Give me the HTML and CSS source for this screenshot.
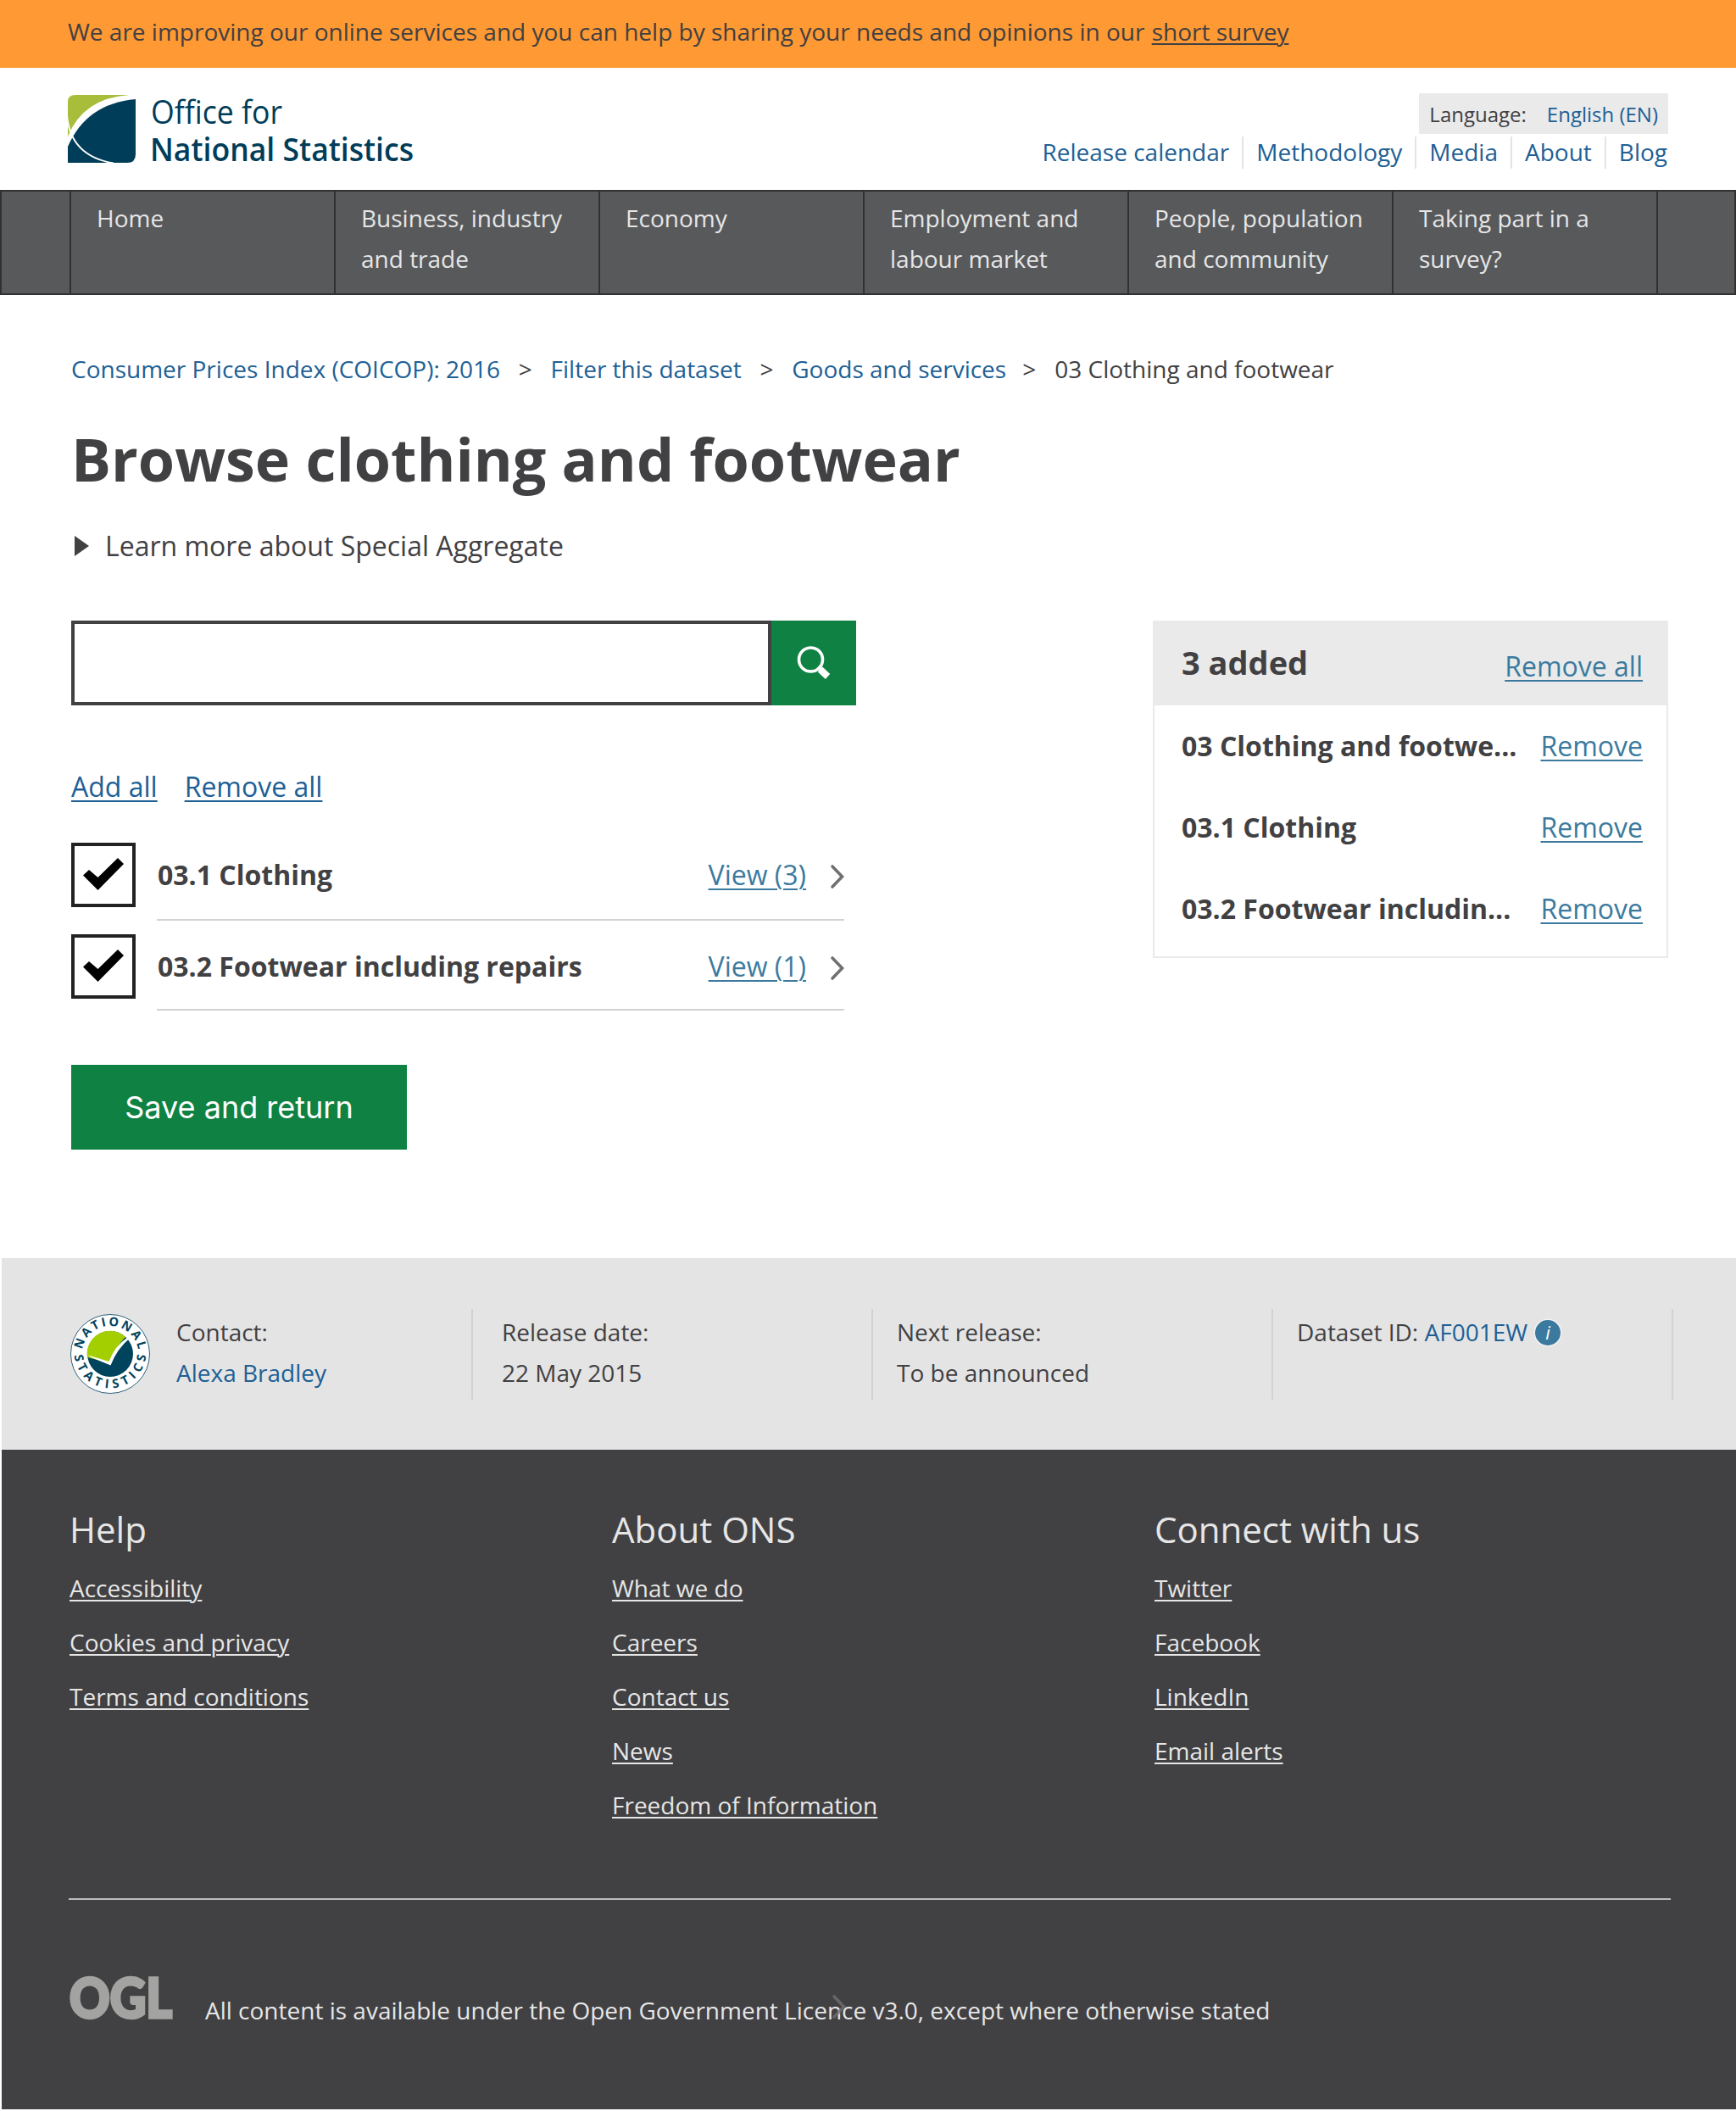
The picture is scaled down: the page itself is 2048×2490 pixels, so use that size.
FILE: index.html
```html
<!DOCTYPE html>
<html lang="en">
<head>
<meta charset="utf-8">
<title>Browse clothing and footwear - Office for National Statistics</title>
<link rel="stylesheet" href="styles.css">
</head>
<body>
<svg width="0" height="0" class="sprite" aria-hidden="true">
  <symbol id="tick" viewBox="0 0 48 38"><path d="M0 20.500L7 14L17.500 23L41 0L48 7L17.500 38Z"/></symbol>
  <symbol id="chevron" viewBox="0 0 18 30"><path d="M3 3L14.500 15L3 27" fill="none" stroke="#707071" stroke-width="3.600" stroke-linecap="round"/></symbol>
</svg>

<div class="banner">We are improving our online services and you can help by sharing your needs and opinions in our <a href="#">short survey</a></div>

<header class="header">
  <a class="logo" href="#">
    <svg width="410" height="84" viewBox="0 0 410 84" role="img">
      <path fill="#003d59" d="M0 61Q22 10 80 5V70Q80 80 70 80H0Z"/>
      <path fill="#a8bd3a" d="M0 8Q0 0 9 0H72Q18 4 0 49Z"/>
      <path fill="none" stroke="#fff" stroke-width="2" d="M-1 24Q3 72 54 80.500"/>
      <g fill="#003d59" class="logo-text">
        <text x="98" y="34" textLength="155" lengthAdjust="spacingAndGlyphs">Office for</text>
        <text x="97" y="78" font-weight="600" textLength="311" lengthAdjust="spacingAndGlyphs">National Statistics</text>
      </g>
    </svg>
  </a>
  <div class="header-right">
    <div class="language"><span>Language:</span><a href="#">English (EN)</a></div>
    <nav class="links">
      <a href="#">Release calendar</a><a href="#">Methodology</a><a href="#">Media</a><a href="#">About</a><a href="#">Blog</a>
    </nav>
  </div>
</header>

<nav class="nav">
  <a href="#">Home</a>
  <a href="#">Business, industry and trade</a>
  <a href="#">Economy</a>
  <a href="#">Employment and labour market</a>
  <a href="#">People, population and community</a>
  <a href="#">Taking part in a survey?</a>
</nav>

<main class="main">
  <div class="breadcrumb">
    <a href="#">Consumer Prices Index (COICOP): 2016</a><span class="sep">&gt;</span><a href="#">Filter this dataset</a><span class="sep">&gt;</span><a href="#">Goods and services</a><span class="sep sep-last">&gt;</span><span>03 Clothing and footwear</span>
  </div>
  <h1>Browse clothing and footwear</h1>
  <div class="learn"><svg width="17" height="24" viewBox="0 0 17 24"><path d="M0 0L17 12L0 24Z" fill="#414042"/></svg>Learn more about Special Aggregate</div>

  <div class="columns">
    <div class="left">
      <form class="search">
        <div class="search-input"></div>
        <div class="search-btn">
          <svg width="42" height="42" viewBox="0 0 42 42"><circle cx="17.500" cy="17" r="14" fill="none" stroke="#fff" stroke-width="3.600"/><path d="M28.500 28.500L37.500 37" stroke="#fff" stroke-width="8"/><path d="M26 25.500L29 28.500" stroke="#fff" stroke-width="4"/></svg>
        </div>
      </form>
      <div class="bulk"><a href="#">Add all</a><a href="#">Remove all</a></div>
      <div class="row">
        <div class="checkbox"><svg width="48" height="38"><use href="#tick"/></svg></div>
        <div class="row-body"><strong>03.1 Clothing</strong><a class="soft" href="#">View (3)</a><svg width="18" height="30"><use href="#chevron"/></svg></div>
      </div>
      <div class="row row-last">
        <div class="checkbox"><svg width="48" height="38"><use href="#tick"/></svg></div>
        <div class="row-body"><strong>03.2 Footwear including repairs</strong><a class="soft" href="#">View (1)</a><svg width="18" height="30"><use href="#chevron"/></svg></div>
      </div>
      <div class="save">Save and return</div>
    </div>

    <aside class="card">
      <div class="card-head"><strong>3 added</strong><a class="soft" href="#">Remove all</a></div>
      <div class="card-row"><strong>03 Clothing and footwe...</strong><a class="soft" href="#">Remove</a></div>
      <div class="card-row"><strong>03.1 Clothing</strong><a class="soft" href="#">Remove</a></div>
      <div class="card-row"><strong>03.2 Footwear includin...</strong><a class="soft" href="#">Remove</a></div>
    </aside>
  </div>
</main>

<section class="info">
  <div class="info-col info-contact">
    <svg width="96" height="96" viewBox="-48 -48 96 96" role="img">
      <defs>
        <path id="arc-top" d="M-31 13A33.500 33.500 0 1 1 31 13"/>
        <path id="arc-bottom" d="M-42.500 -2A42.500 42.500 0 0 0 42.500 -2"/>
      </defs>
      <circle r="46.500" fill="#fff" stroke="#2f6178" stroke-width="1"/>
      <circle r="27" fill="#00435c"/>
      <path d="M-27 4A27 27 0 0 1 18 -20Q6 -8 0 11Z" fill="#a3cf00"/>
      <path d="M-26 1.500L-1.500 9Q5 -9 21 -20L22.500 -18Q8 -6 0.500 13.500L-22.500 4Z" fill="#fff"/>
      <g class="badge-text" fill="#00435c">
        <text><textPath href="#arc-top" startOffset="50%" text-anchor="middle" textLength="94">NATIONAL</textPath></text>
        <text><textPath href="#arc-bottom" startOffset="50%" text-anchor="middle" textLength="126">STATISTICS</textPath></text>
      </g>
    </svg>
    <div>Contact:<br><a href="#">Alexa Bradley</a></div>
  </div>
  <div class="info-col">Release date:<br>22 May 2015</div>
  <div class="info-col">Next release:<br>To be announced</div>
  <div class="info-col">Dataset ID: <a href="#">AF001EW</a><span class="i">i</span></div>
</section>

<footer class="footer">
  <div class="footer-cols">
    <div><h2>Help</h2><a href="#">Accessibility</a><a href="#">Cookies and privacy</a><a href="#">Terms and conditions</a></div>
    <div><h2>About ONS</h2><a href="#">What we do</a><a href="#">Careers</a><a href="#">Contact us</a><a href="#">News</a><a href="#">Freedom of Information</a></div>
    <div><h2>Connect with us</h2><a href="#">Twitter</a><a href="#">Facebook</a><a href="#">LinkedIn</a><a href="#">Email alerts</a></div>
  </div>
  <div class="licence">
    <svg class="ogl" width="124" height="64" viewBox="0 0 124 64"><text class="ogl-text" x="1" y="49.500" textLength="121" lengthAdjust="spacingAndGlyphs">OGL</text></svg>
    <p>All content is available under the Open Government Licence v3.0, except where otherwise stated<svg class="ghost" width="18" height="30"><use href="#chevron"/></svg></p>
  </div>
</footer>
</body>
</html>
```
FILE: styles.css
```css
* { box-sizing: border-box; }
body { margin: 0; background: #fff; color: #414042; font: 28px/48px "Open Sans", "Noto Sans", sans-serif; }
a { color: #206095; text-decoration: none; }
svg { display: block; flex: none; overflow: visible; }
.sprite { position: absolute; }

.banner { height: 80px; padding-left: 80px; background: #ff9933; line-height: 74px; }
.banner a { margin-left: 1px; color: inherit; text-decoration: underline; text-underline-offset: 3px; text-decoration-thickness: 2px; }

.header { display: flex; justify-content: space-between; height: 144px; padding: 30px 80px 0; }
.logo { padding-top: 2px; }
.logo-text { font-family: "Open Sans", sans-serif; font-size: 38px; font-variant-ligatures: none; }
.header-right { display: flex; flex-direction: column; align-items: flex-end; }
.language { display: flex; gap: 24px; height: 48px; padding: 1px 12px 0 12px; margin-bottom: 3px; background: #eaeaea; font-size: 24px; }
.links { display: flex; line-height: 36px; height: 38px; }
.links a { padding: 0 15px 0 15px; border-right: 2px solid #e4e4e4; }
.links a:last-child { padding-right: 1px; border: 0; }

.nav { display: grid; grid-template-columns: repeat(6, 312px); height: 124px; padding-left: 80px; background: #58595b; border: 2px solid #323132; }
.nav a { padding: 7px 30px 0 30px; color: #e6e6e6; border-left: 2px solid #323132; }
.nav a:last-child { width: 314px; border-right: 2px solid #323132; }

.main { padding: 67px 80px 128px 84px; }
.breadcrumb { display: flex; line-height: 40px; }
.sep { width: 59.5px; text-align: center; }
.sep-last { width: 57px; padding-right: 3px; }
h1 { margin: 46px 0 43px; font-size: 70px; line-height: 80px; font-weight: 700; }
.learn { display: flex; align-items: center; gap: 19px; padding-left: 4px; font-size: 32px; line-height: 40px; }
.columns { display: flex; justify-content: space-between; align-items: flex-start; margin-top: 68px; font-size: 32px; line-height: 40px; }
.left { width: 926px; }
.search { display: flex; height: 100px; }
.search-input { width: 826px; border: 4px solid #414042; }
.search-btn { display: flex; align-items: center; justify-content: center; width: 100px; background: #0f8243; }
.bulk { display: flex; gap: 32px; margin: 76px 0 46px; }
.bulk a, .soft { text-decoration: underline; text-decoration-thickness: 2px; text-underline-offset: 4px; }
.soft { color: #3b7a9e; }
.row { display: flex; justify-content: space-between; width: 912px; height: 92px; margin-bottom: 16px; }
.row-last { height: 90px; margin-bottom: 64px; }
.checkbox { display: flex; align-items: center; justify-content: center; width: 76px; height: 76px; padding-bottom: 2px; border: 4px solid #222; }
.row-body { display: flex; align-items: center; width: 811px; padding: 0 0 14px 1px; border-bottom: 2px solid #d0d2d3; }
.row-last .row-body { padding-bottom: 12px; }
.row-body strong { flex: 1; }
.row-body svg { margin: 4px -1px 0 28px; }
.save { width: 396px; height: 100px; background: #0f8243; color: #fff; font: 36px/101px Inter, sans-serif; text-align: center; }

.card { width: 608px; height: 398px; border: 2px solid #eaeaea; }
.card-head { display: flex; justify-content: space-between; height: 98px; padding: 27px 28px 0 32px; background: #eaeaea; }
.card-head strong { font-size: 38px; }
.card-head a { padding-top: 5px; }
.card-row { display: flex; justify-content: space-between; height: 96px; padding: 28px 28px 0 32px; }

.info { display: grid; grid-template-columns: 476px 472px 472px 472px; height: 226px; margin-left: 2px; padding: 60px 0 0 80px; background: #e4e4e4; }
.info-col { height: 107px; padding: 3px 0 0 28px; border-right: 2px solid #d0d2d3; }
.info-col.info-contact { display: flex; gap: 30px; padding-left: 0; }
.info-contact svg { margin-top: 2px; }
.info-contact + .info-col { padding-left: 34px; }
.i { display: inline-block; width: 30px; height: 30px; margin-left: 9px; border-radius: 50%; background: #3b7a9e; box-shadow: 0 0 0 1.5px #f2f2f2; color: #fff; font-size: 22px; font-style: italic; line-height: 29px; text-align: center; vertical-align: 2px; }

.footer { height: 778px; margin-left: 2px; padding: 70px 77px 0 79px; background: #414042; color: #e6e6e6; }
.footer a { display: block; width: max-content; color: inherit; line-height: 64px; text-decoration: underline; text-decoration-thickness: 2px; text-underline-offset: 3px; }
.footer-cols { display: grid; grid-template-columns: repeat(3, 640px); width: 1890px; height: 461px; padding-left: 1px; border-bottom: 2px solid #bcbcbc; }
.footer h2 { margin: 0 0 13px; font-size: 42px; line-height: 48px; font-weight: 400; }
.licence { display: flex; padding-top: 89px; }
.licence p { position: relative; margin: 17px 0 0 37px; }
.ghost { position: absolute; left: 739px; top: 5px; opacity: .8; }
.ogl-text { fill: #a3a3a1; stroke: #a3a3a1; stroke-width: 3.5px; font-family: Lato, sans-serif; font-weight: 900; font-size: 64px; }
.badge-text { font-family: "Open Sans", sans-serif; font-weight: 700; font-size: 14.5px; }
```
